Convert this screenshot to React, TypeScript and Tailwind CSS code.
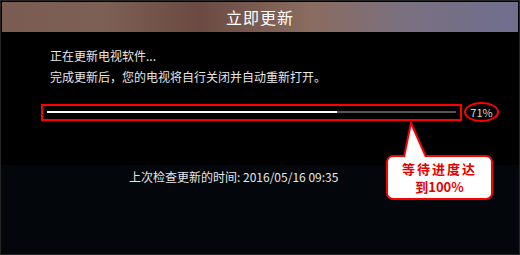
const App = () => {
  return (
    <div
      className="relative w-[520px] h-[255px] overflow-hidden bg-black border border-[#262626]"
      style={{ fontFamily: '"Noto Sans CJK SC", "Noto Sans", sans-serif' }}
    >
      <div className="mx-[1px] mt-[1px] h-[30px] flex items-center justify-center bg-[linear-gradient(90deg,#7a5c52_0%,#7d6055_20%,#6a4a42_38%,#8a6c60_60%,#7a7080_78%,#6f6e8e_100%)]">
        <span className="text-[16px] leading-none text-white tracking-[1px]">立即更新</span>
      </div>

      <div className="h-[133px] bg-black">
        <div className="pl-[49px] pt-[13px] text-[12px] leading-[21px] text-[#e6e6e6]">
          <p>正在更新电视软件...</p>
          <p>完成更新后，您的电视将自行关闭并自动重新打开。</p>
        </div>

        <div className="flex items-center mt-[15px] ml-[40px]">
          <div className="w-[421px] h-[17px] border-2 border-[#ff0000] flex items-center px-[4px]">
            <div className="w-full h-[2px] bg-[#555555]">
              <div className="h-full w-[71%] bg-white" />
            </div>
          </div>
          <div className="ml-[2px] w-[35px] h-[20px] rounded-[50%] border-2 border-[#ff0000] flex items-center justify-center text-[11px] leading-none text-[#d8d8d8]">
            71%
          </div>
        </div>
      </div>

      <div className="h-full bg-[#03060b] pt-[4px] pl-[128px] text-[12px] leading-[16px] text-[#e6e6e6]">
        上次检查更新的时间: 2016/05/16 09:35
      </div>

      <div className="absolute left-[385px] top-[154px] w-[107px] h-[45px] rounded-[7px] border-2 border-[#ff0000] bg-white flex flex-col items-center justify-center text-[#e60000] font-bold text-[13px] leading-[18px]">
        <span className="tracking-[2px]">等待进度达</span>
        <span>到100%</span>
      </div>
      <svg className="absolute left-[400px] top-[121px]" width="28" height="36" viewBox="0 0 28 36">
        <path d="M3 35 L10 1 L25 35" fill="white" stroke="#ff0000" strokeWidth="2" strokeLinejoin="miter" />
      </svg>
    </div>
  );
};

export default App;
